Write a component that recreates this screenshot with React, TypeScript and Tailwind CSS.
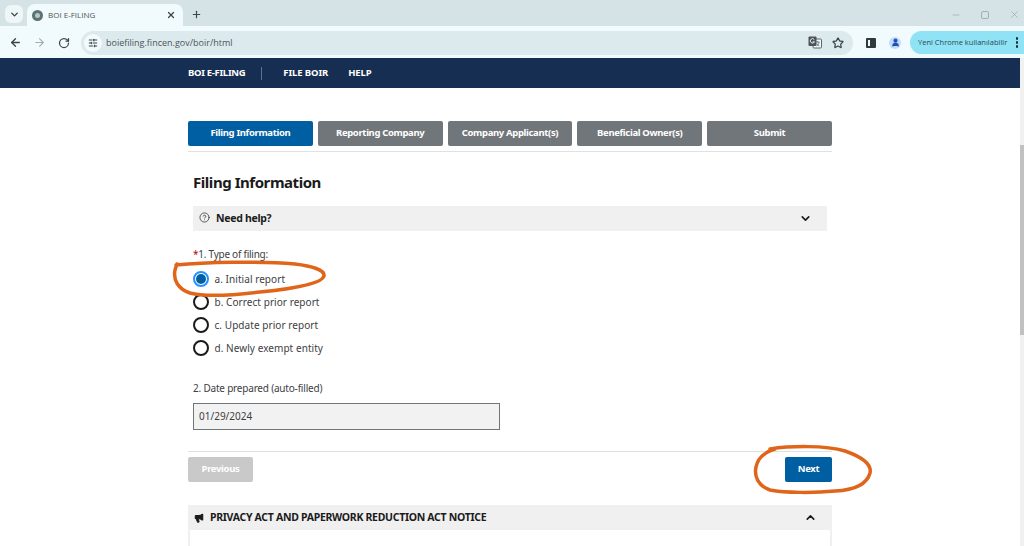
import React from "react";
import { ArrowLeft, ArrowRight, ChevronDown, ChevronUp, Megaphone, Minus, Plus, RotateCw, Star, X, CircleHelp, SlidersHorizontal, User } from "lucide-react";

const steps = ["Filing Information", "Reporting Company", "Company Applicant(s)", "Beneficial Owner(s)", "Submit"];
const filingTypes = ["a. Initial report", "b. Correct prior report", "c. Update prior report", "d. Newly exempt entity"];

const TranslateIcon = () => (
  <svg width="14" height="13" viewBox="0 0 14 13">
    <rect x="5" y="3" width="8.5" height="9" rx="1" fill="#f1fafc" stroke="#5b6568" strokeWidth="1" />
    <path d="M8 6h3.5M9.7 5v1M8.6 10c1.4-.8 2.2-2 2.5-4M8.8 7.4c.6 1.2 1.4 2 2.7 2.6" fill="none" stroke="#5b6568" strokeWidth=".8" />
    <rect x="0.5" y="0.5" width="8" height="9.5" rx="1" fill="#4a5356" />
    <path d="M6.3 3.6a2.2 2.2 0 1 0 .2 2.2H4.6" fill="none" stroke="#e8f1f3" strokeWidth="1" />
  </svg>
);

const BrowserBar = () => (
  <div className="font-['Open_Sans',sans-serif] text-[#3c4448]">
    {/* tab strip */}
    <div className="flex h-[26px] items-end bg-[#d5e3e7] pl-[5px]">
      <div className="mb-[3px] flex h-[18px] w-[18px] items-center justify-center rounded-[6px] bg-[#eef6f8]">
        <ChevronDown size={11} strokeWidth={3} />
      </div>
      <div className="ml-[4px] flex h-[22px] w-[156px] items-center rounded-t-[8px] bg-[#f1fafc] pl-[5px] pr-[7px]">
        <div className="flex h-[11px] w-[11px] items-center justify-center rounded-full bg-[#5d7275]">
          <div className="h-[5px] w-[5px] rounded-full bg-[#b9c7c4]" />
        </div>
        <span className="ml-[5px] flex-1 text-[8px] text-[#4c5558]">BOI E-FILING</span>
        <X size={10} strokeWidth={3} />
      </div>
      <div className="mb-[6px] ml-[8px]">
        <Plus size={11} strokeWidth={2.5} />
      </div>
      <div className="mb-[6px] ml-auto flex items-center gap-[20px] pr-[4px] text-[#a3b0b3]">
        <Minus size={10} />
        <div className="h-[8px] w-[8px] rounded-[2px] border border-[#a3b0b3]" />
        <X size={11} />
      </div>
    </div>
    {/* address bar */}
    <div className="flex h-[32px] items-center bg-[#f1fafc] pl-[9px] pt-[1px]">
      <ArrowLeft size={13} strokeWidth={2.5} />
      <ArrowRight size={13} strokeWidth={2} className="ml-[11px] text-[#a3adb0]" />
      <RotateCw size={12} strokeWidth={2.5} className="ml-[12px]" />
      <div className="ml-[11px] flex h-[24px] w-[772px] items-center rounded-full bg-[#dce9ed] pl-[3px] pr-[9px]">
        <div className="flex h-[18px] w-[18px] items-center justify-center rounded-full bg-[#f1fafc]">
          <SlidersHorizontal size={10} strokeWidth={2.5} />
        </div>
        <span className="ml-[4px] flex-1 text-[9px] text-[#4c5558]">boiefiling.fincen.gov/boir/html</span>
        <TranslateIcon />
        <Star size={12} strokeWidth={2.5} className="ml-[10px]" />
      </div>
      <div className="ml-[13px] flex h-[10px] w-[10px] justify-end rounded-[1px] border-2 border-[#30393c]">
        <div className="w-[4px] bg-[#30393c]" />
      </div>
      <div className="ml-[13px] flex h-[12px] w-[12px] items-center justify-center rounded-full bg-[#c5dcf8] text-[#1d50b4]">
        <User size={9} strokeWidth={3} fill="#1d50b4" />
      </div>
      <div className="ml-[9px] flex h-[23px] flex-1 items-center justify-between rounded-l-full bg-[#8fe3f5] pl-[8px] pr-[6px] text-[7.5px] text-[#2b4750]">
        <span>Yeni Chrome kullanılabilir</span>
        <div className="flex flex-col gap-[1.5px]">
          <span className="h-[2.5px] w-[2.5px] rounded-full bg-[#12303a]" />
          <span className="h-[2.5px] w-[2.5px] rounded-full bg-[#12303a]" />
          <span className="h-[2.5px] w-[2.5px] rounded-full bg-[#12303a]" />
        </div>
      </div>
    </div>
  </div>
);

const App = () => {
  return (
    <div className="relative h-[546px] w-[1024px] overflow-hidden bg-white font-['Noto_Sans',sans-serif] text-[#1b1b1b]">
      <BrowserBar />
      <div className="flex">
        <div className="w-[1020px]">
          {/* site nav */}
          <nav className="flex h-[30px] items-center bg-[#162e51] pl-[188px] text-[9.5px] font-bold tracking-[-0.3px] text-white">
            <span>BOI E-FILING</span>
            <span className="ml-[16px] mr-[21px] h-[13px] w-px bg-[#5c7090]" />
            <span className="tracking-[-0.1px]">FILE BOIR</span>
            <span className="ml-[20px] tracking-[-0.1px]">HELP</span>
          </nav>

          <main className="ml-[188px] w-[644px] pt-[33px]">
            <div className="flex gap-[5px] border-b border-[#dfe1e2] pb-[5px]">
              {steps.map((step, i) => (
                <div
                  key={step}
                  className={
                    i === 0
                      ? "flex h-[25px] w-[125px] items-center justify-center rounded-[2px] bg-[#005ea2] text-[9.5px] font-bold tracking-[-0.35px] text-white"
                      : "flex h-[25px] w-[125px] items-center justify-center rounded-[2px] bg-[#71767a] text-[9.5px] font-bold tracking-[-0.35px] text-white"
                  }
                >
                  {step}
                </div>
              ))}
            </div>

            <div className="px-[5px]">
              <h1 className="mt-[20px] text-[15px] font-bold leading-[20px] tracking-[-0.45px]">Filing Information</h1>
              <div className="mt-[14px] flex h-[25px] items-center justify-between bg-[#f0f0f0] pl-[6px] pr-[15px]">
                <div className="flex items-center gap-[6px] text-[10.5px] font-bold tracking-[-0.3px]">
                  <CircleHelp size={11} strokeWidth={1.5} className="mb-[2px]" />
                  Need help?
                </div>
                <ChevronDown size={13} strokeWidth={3} />
              </div>

              <div className="mt-[17px] text-[10px] leading-[13px] tracking-[-0.25px] text-[#3d4043]">
                <span className="text-[#b50909]">*</span>1. Type of filing:
              </div>
              <div className="mt-[9px] flex flex-col gap-[5px]">
                {filingTypes.map((label, i) => (
                  <div key={label} className="flex h-[18px] items-center gap-[5.5px] text-[10px] tracking-[0.06px] text-[#3d4043]">
                    {i === 0 ? (
                      <span className="flex h-[16px] w-[16px] items-center justify-center rounded-full border-2 border-[#2491ff]">
                        <span className="h-[10px] w-[10px] rounded-full bg-[#005ea2]" />
                      </span>
                    ) : (
                      <span className="h-[16px] w-[16px] rounded-full border-2 border-[#1b1b1b]" />
                    )}
                    {label}
                  </div>
                ))}
              </div>

              <div className="mt-[25px] text-[10px] leading-[13px] tracking-[-0.2px] text-[#3d4043]">2. Date prepared (auto-filled)</div>
              <div className="mt-[8px] flex h-[27px] w-[307px] items-center border border-[#71767a] bg-[#f2f2f2] pl-[5px] text-[10px] text-[#3d4043]">
                01/29/2024
              </div>
            </div>

            <div className="mt-[21px] flex justify-between border-t border-[#dfe1e2] pt-[5px]">
              <div className="flex h-[25px] w-[65px] items-center justify-center rounded-[2px] bg-[#c9c9c9] text-[9.5px] font-bold tracking-[-0.35px] text-white">
                Previous
              </div>
              <div className="flex h-[25px] w-[47px] items-center justify-center rounded-[2px] bg-[#005ea2] text-[9.5px] font-bold tracking-[-0.35px] text-white">
                Next
              </div>
            </div>

            <div className="mt-[23px] flex h-[25px] items-center justify-between bg-[#f0f0f0] pl-[6px] pr-[15px]">
              <div className="flex items-center gap-[6px] pt-[1px] text-[10.5px] font-bold tracking-[-0.3px]">
                <Megaphone size={10} strokeWidth={2.5} fill="#1b1b1b" />
                PRIVACY ACT AND PAPERWORK REDUCTION ACT NOTICE
              </div>
              <ChevronUp size={13} strokeWidth={3} />
            </div>
            <div className="h-[30px] border-x-2 border-[#f0f0f0]" />
          </main>
        </div>
        {/* page scrollbar */}
        <div className="flex h-[488px] w-[4px] flex-col bg-[#f1f1f1]">
          <div className="mt-[87px] h-[190px] bg-[#c1c1c1]" />
        </div>
      </div>

      {/* marker circles drawn over the page */}
      <svg className="pointer-events-none absolute left-0 top-0" width="1024" height="546" fill="none" stroke="#e0651a" strokeWidth="3.5" strokeLinecap="round">
        <path d="M176 265 C 205 262, 260 261, 295 264 C 312 266, 325 270, 324 276 C 322 284, 290 289, 260 292 C 235 295, 205 297, 190 293 C 178 289, 173 280, 175 270 L 177 264" />
        <path d="M770 449 C 790 446, 825 445, 845 451 C 862 457, 872 464, 870 473 C 867 484, 855 490, 835 491 C 815 493, 785 493, 770 490 C 758 486, 754 476, 756 467 C 758 457, 765 452, 775 449" />
      </svg>
    </div>
  );
};

export default App;
